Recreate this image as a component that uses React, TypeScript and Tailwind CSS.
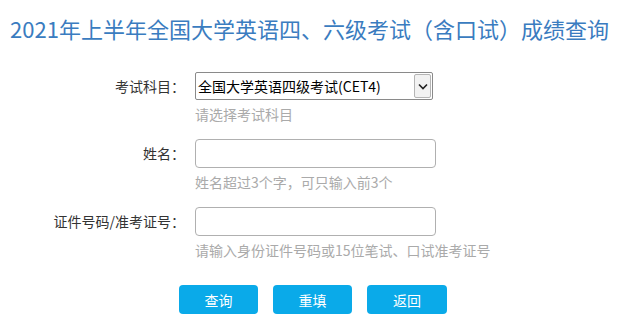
const FONT = "font-['Microsoft_YaHei','Noto_Sans_CJK_SC','Liberation_Sans',sans-serif]";

function Row({
  label,
  hint,
  children,
  last,
}: {
  label: string;
  hint: string;
  children: React.ReactNode;
  last?: boolean;
}) {
  return (
    <div className={`flex ${last ? "mb-[25px]" : "mb-[15px]"}`}>
      <div className="w-[185px] pt-[4px] text-right text-sm leading-[20px] text-[#333]">{label}</div>
      <div className="ml-[10px] flex flex-col">
        {children}
        <p className="mt-[4px] text-sm leading-[20px] text-[#aaa]">{hint}</p>
      </div>
    </div>
  );
}

export default function App() {
  return (
    <div className={`h-[334px] w-[619px] overflow-hidden bg-white ${FONT}`}>
      <h1 className="pt-[13px] text-center text-[22px] leading-[30px] text-[#3a7cc0]">
        2021年上半年全国大学英语四、六级考试（含口试）成绩查询
      </h1>

      <div className="mt-[29px]">
        <Row label="考试科目：" hint="请选择考试科目">
          <div className="flex h-[28px] w-[238px] items-center rounded-[2px] border border-[#8a8a8a] bg-white">
            <span className="flex-1 pl-[2px] text-sm text-black">全国大学英语四级考试(CET4)</span>
            <span className="mr-px flex h-[24px] w-[17px] items-center justify-center rounded-[2px] border border-[#b5b5b5] bg-[#f2f2f2]">
              <svg width="10" height="7" viewBox="0 0 10 7" fill="none">
                <path d="M1 1.5 L5 5.5 L9 1.5" stroke="#222" strokeWidth="1.6" />
              </svg>
            </span>
          </div>
        </Row>

        <Row label="姓名：" hint="姓名超过3个字，可只输入前3个">
          <input className="h-[29px] w-[241px] rounded-[4px] border border-[#b0b0b0] bg-white px-2 text-sm outline-none" />
        </Row>

        <Row label="证件号码/准考证号：" hint="请输入身份证件号码或15位笔试、口试准考证号" last>
          <input className="h-[29px] w-[241px] rounded-[4px] border border-[#b0b0b0] bg-white px-2 text-sm outline-none" />
        </Row>
      </div>

      <div className="flex gap-[15px] pl-[179px]">
        <button className="h-[29px] w-[79px] rounded-[4px] bg-[#0aaae9] text-sm text-white">查询</button>
        <button className="h-[29px] w-[79px] rounded-[4px] bg-[#0aaae9] text-sm text-white">重填</button>
        <button className="h-[29px] w-[80px] rounded-[4px] bg-[#0aaae9] text-sm text-white">返回</button>
      </div>
    </div>
  );
}
